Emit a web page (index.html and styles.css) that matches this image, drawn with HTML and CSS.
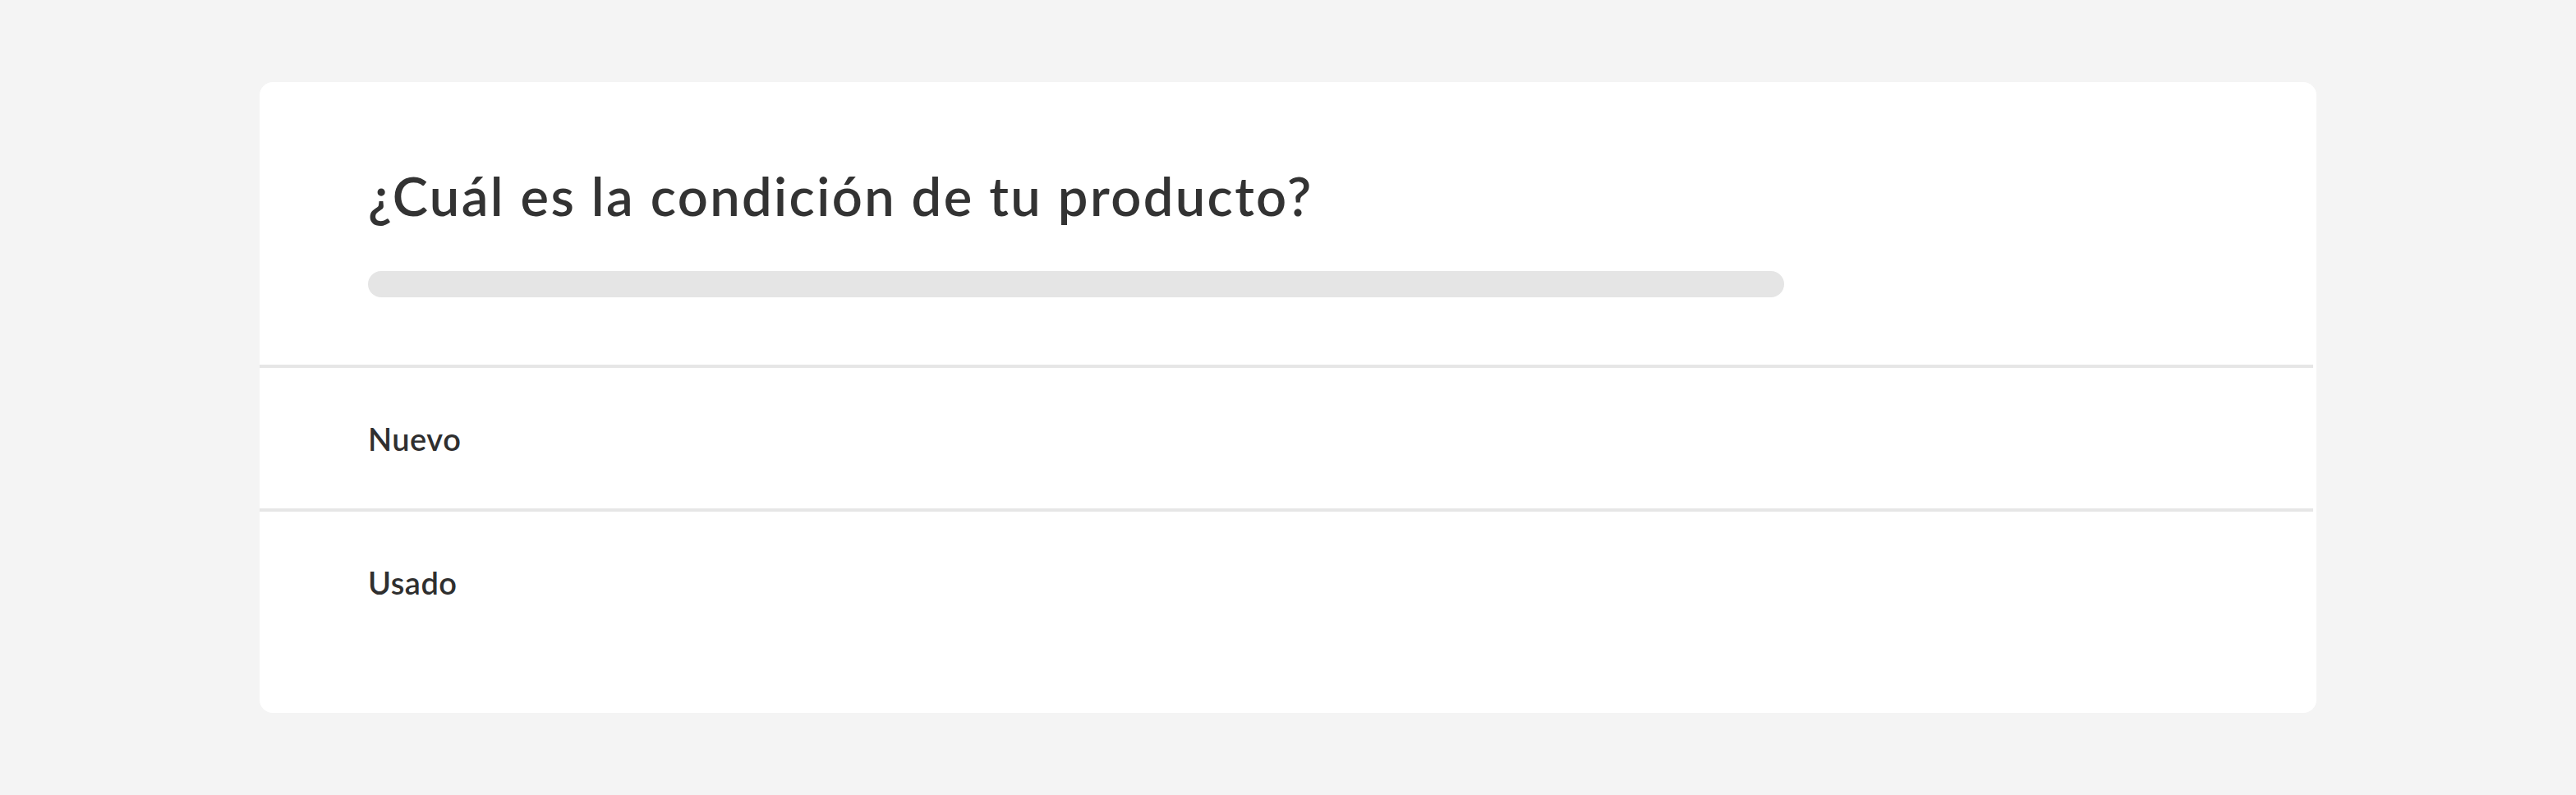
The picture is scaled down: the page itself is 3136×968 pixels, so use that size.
FILE: index.html
```html
<!DOCTYPE html>
<html lang="es">
<head>
<meta charset="utf-8">
<title>Condición del producto</title>
<link rel="stylesheet" href="styles.css">
</head>
<body>
  <main class="card">
    <header class="card-header">
      <h1 class="title">¿Cuál es la condición de tu producto?</h1>
      <div class="progress"></div>
    </header>
    <ul class="options">
      <li class="option">Nuevo</li>
      <li class="option">Usado</li>
    </ul>
  </main>
</body>
</html>
```

FILE: styles.css
```css
html, body {
  margin: 0;
  padding: 0;
}
body {
  background: #f4f4f4;
  padding: 100px 316px;
  font-family: Lato, "Open Sans", "Liberation Sans", sans-serif;
  color: #333333;
}
.card {
  background: #ffffff;
  border-radius: 16px;
  padding-bottom: 74px;
  overflow: hidden;
}
.card-header {
  padding: 98px 0 82px 132px;
}
.title {
  margin: 0;
  font-size: 65px;
  line-height: 80px;
  font-weight: 600;
  letter-spacing: 2.4px;
  color: #333333;
}
.progress {
  margin-top: 52px;
  width: 1724px;
  height: 32px;
  border-radius: 16px;
  background: #e5e5e5;
}
.options {
  list-style: none;
  margin: 0 4px 0 0;
  padding: 0;
}
.option {
  display: flex;
  align-items: center;
  height: 171px;
  padding-left: 132px;
  border-top: 4px solid #e6e6e6;
  font-size: 38px;
  font-weight: 600;
  letter-spacing: 0.5px;
  color: #2f2f2f;
}
```
